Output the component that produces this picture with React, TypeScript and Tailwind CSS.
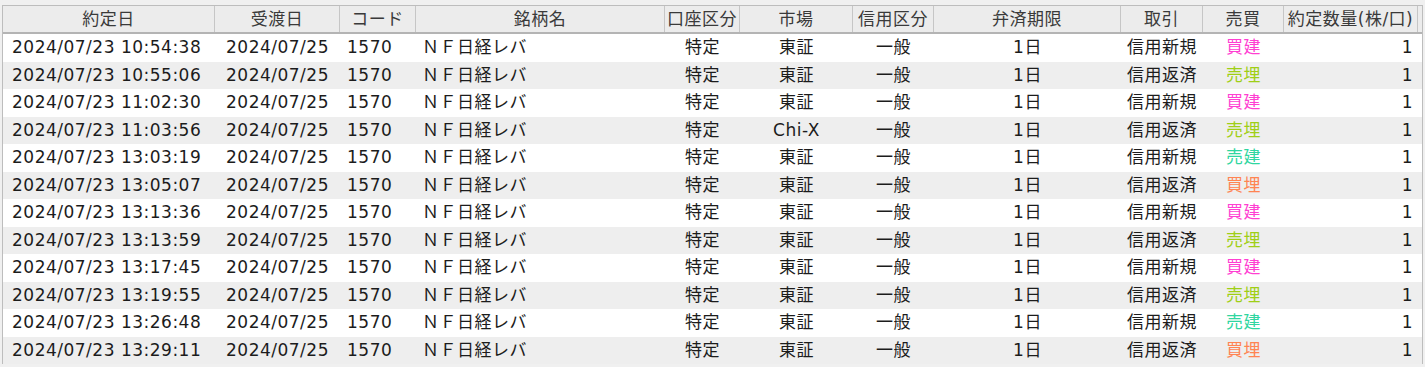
const columns = [
  { label: '約定日', align: 'justify-start pl-[9px]' },
  { label: '受渡日', align: 'justify-start pl-[11px]' },
  { label: 'コード', align: 'justify-start pl-[7px]' },
  { label: '銘柄名', align: 'justify-start pl-[6px]' },
  { label: '口座区分', align: 'justify-center' },
  { label: '市場', align: 'justify-center' },
  { label: '信用区分', align: 'justify-center' },
  { label: '弁済期限', align: 'justify-center' },
  { label: '取引', align: 'justify-center' },
  { label: '売買', align: 'justify-center' },
  { label: '約定数量(株/口)', align: 'justify-end pr-[5px]' },
]

const sideColors: Record<string, string> = {
  買建: 'text-[#ff3fd2]',
  売埋: 'text-[#9fcf16]',
  売建: 'text-[#2fd6a0]',
  買埋: 'text-[#ff8452]',
}

type Trade = {
  time: string
  market: string
  kind: string
  side: string
}

const trades: Trade[] = [
  { time: '10:54:38', market: '東証', kind: '信用新規', side: '買建' },
  { time: '10:55:06', market: '東証', kind: '信用返済', side: '売埋' },
  { time: '11:02:30', market: '東証', kind: '信用新規', side: '買建' },
  { time: '11:03:56', market: 'Chi-X', kind: '信用返済', side: '売埋' },
  { time: '13:03:19', market: '東証', kind: '信用新規', side: '売建' },
  { time: '13:05:07', market: '東証', kind: '信用返済', side: '買埋' },
  { time: '13:13:36', market: '東証', kind: '信用新規', side: '買建' },
  { time: '13:13:59', market: '東証', kind: '信用返済', side: '売埋' },
  { time: '13:17:45', market: '東証', kind: '信用新規', side: '買建' },
  { time: '13:19:55', market: '東証', kind: '信用返済', side: '売埋' },
  { time: '13:26:48', market: '東証', kind: '信用新規', side: '売建' },
  { time: '13:29:11', market: '東証', kind: '信用返済', side: '買埋' },
]

const grid =
  'grid grid-cols-[212px_125px_76px_249px_75px_113px_81px_187px_82px_81px_134px_1fr]'

export default function App() {
  return (
    <div className="w-[1425px] h-[367px] overflow-hidden bg-[#f0f0f0] pt-[5px] pl-[2px] font-['DejaVu_Sans','Noto_Sans_CJK_JP',sans-serif] text-[17px] tracking-[0.5px]">
      <div className="w-[1421px] border-l border-t border-r border-[#bdbdbd]">
        {/* Header */}
        <div className={`${grid} h-[28px] bg-[#ececec] border-b-2 border-[#b4b4b4] text-[#3a3a3a]`}>
          {columns.map((c) => (
            <div
              key={c.label}
              className="flex items-center justify-center border-r border-[#c6c6c6] leading-none whitespace-nowrap"
            >
              {c.label}
            </div>
          ))}
          <div />
        </div>

        {/* Rows */}
        {trades.map((t, i) => (
          <div
            key={t.time}
            className={`${grid} h-[27.5px] text-[#1c1c1c] leading-none whitespace-nowrap ${
              i % 2 === 0 ? 'bg-white' : 'bg-[#eeeeee]'
            }`}
          >
            <div className={`flex items-center ${columns[0].align}`}>2024/07/23 {t.time}</div>
            <div className={`flex items-center ${columns[1].align}`}>2024/07/25</div>
            <div className={`flex items-center ${columns[2].align}`}>1570</div>
            <div className={`flex items-center ${columns[3].align}`}>ＮＦ日経レバ</div>
            <div className={`flex items-center ${columns[4].align}`}>特定</div>
            <div className={`flex items-center ${columns[5].align}`}>{t.market}</div>
            <div className={`flex items-center ${columns[6].align}`}>一般</div>
            <div className={`flex items-center ${columns[7].align}`}>1日</div>
            <div className={`flex items-center ${columns[8].align}`}>{t.kind}</div>
            <div className={`flex items-center ${columns[9].align} ${sideColors[t.side]}`}>{t.side}</div>
            <div className={`flex items-center ${columns[10].align}`}>1</div>
            <div />
          </div>
        ))}
      </div>
    </div>
  )
}
